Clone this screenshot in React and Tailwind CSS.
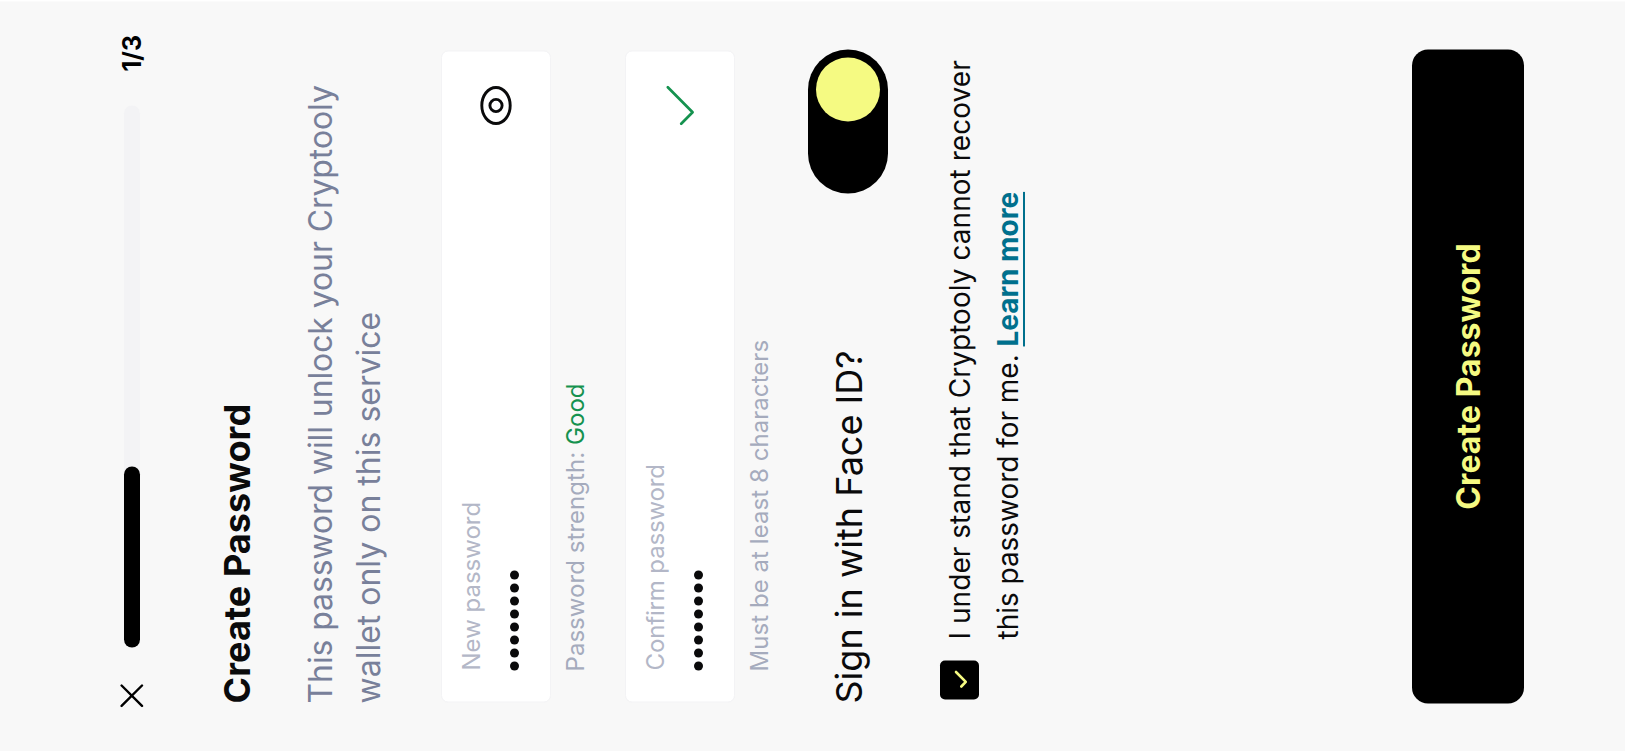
const Dots = () => (
  <div className="mt-[23px] flex h-2.5 items-center gap-1">
    {Array.from({ length: 8 }, (_, i) => (
      <span key={i} className="size-[9px] rounded-full bg-[#0a0a0b]" />
    ))}
  </div>
);

const Field = ({ label, icon }) => (
  <div className="mx-[49px] flex h-[110px] justify-between rounded-[7px] border border-[#f3f3f5] bg-white pr-[34px] pl-[31px]">
    <div className="pt-4">
      <div className="text-2xl leading-7 text-[#b3b7c7]">{label}</div>
      <Dots />
    </div>
    <div className="flex items-center">{icon}</div>
  </div>
);

const EyeIcon = () => (
  <svg width="40" height="32" viewBox="0 0 40 32" fill="none" stroke="#0a0a0b" strokeWidth="2.9">
    <ellipse cx="20" cy="16" rx="18" ry="14.2" />
    <circle cx="20" cy="16" r="6.1" />
  </svg>
);

const CheckIcon = () => (
  <svg width="40" height="32" viewBox="0 0 40 32" fill="none" stroke="#15924f" strokeWidth="2.7" strokeLinecap="round" strokeLinejoin="round">
    <path d="M1.8 17.2 L13.2 28.6 L38.2 3.8" />
  </svg>
);

export default function App() {
  return (
    <div className="h-[751px] w-[1625px] overflow-hidden bg-white">
      <div className="flex h-[1625px] w-[750px] origin-top-left translate-y-[751.5px] -rotate-90 flex-col bg-[#f8f8f8] pt-[108px] font-['Inter',sans-serif] text-[#0a0a0b]">
        <header className="flex h-12 items-center pl-11">
          <svg width="24" height="24" viewBox="0 0 24 24" fill="none" stroke="#000" strokeWidth="2.4" strokeLinecap="round">
            <path d="M1.6 1.6 L22 22 M22 1.6 L1.6 22" />
          </svg>
          <div className="ml-9 h-4 w-[542px] rounded-full bg-[#f3f3f5]">
            <div className="h-4 w-[181px] rounded-full bg-black" />
          </div>
          <span className="ml-[34px] pt-px text-[25px] font-bold text-black">1/3</span>
        </header>

        <h1 className="mt-[59px] pl-12 text-4xl leading-[44px] font-bold tracking-[0.07px]">Create Password</h1>
        <p className="mt-[38px] pl-12 text-[32px] leading-[48px] text-[#78809a]">
          <span className="tracking-[-0.1px]">This password will unlock your Cryptooly</span>
          <br />
          wallet only on this service
        </p>

        <div className="mt-12">
          <Field label="New password" icon={<EyeIcon />} />
          <p className="mt-[11px] pl-20 text-2xl leading-7 tracking-[0.05px] text-[#a5abbd]">
            Password strength: <span className="text-[#15924f]">Good</span>
          </p>
        </div>
        <div className="mt-[35px]">
          <Field label={<span className="tracking-[-0.14px]">Confirm password</span>} icon={<CheckIcon />} />
          <p className="mt-[11px] pl-20 text-2xl leading-7 tracking-[0.06px] text-[#a5abbd]">Must be at least 8 characters</p>
        </div>

        <div className="mx-12 mt-[34px] flex h-20 items-center justify-between">
          <span className="pt-px text-4xl">Sign in with Face ID?</span>
          <div className="flex h-20 w-36 justify-end rounded-full bg-black p-2">
            <div className="size-16 rounded-full bg-[#f5fa82]" />
          </div>
        </div>

        <div className="mt-12 flex pl-[52px]">
          <div className="mt-1 flex size-[39px] items-center justify-center rounded-[5px] bg-black">
            <svg width="20" height="16" viewBox="0 0 20 16" fill="none" stroke="#f5fa82" strokeWidth="2.6" strokeLinecap="round" strokeLinejoin="round">
              <path d="M3 9.3 L7.6 13.8 L17.5 4" />
            </svg>
          </div>
          <p className="ml-[21px] text-[28px] leading-[48px] tracking-[-0.03px] whitespace-nowrap">
            <span className="tracking-[0.05px]">I under stand that Cryptooly cannot recover</span>
            <br />
            this password for me.{" "}
            <a className="font-bold text-[#00708d] underline decoration-2 underline-offset-[5px]">Learn more</a>
          </p>
        </div>

        <button className="mx-12 mt-[380px] h-28 rounded-2xl bg-black pt-px text-[32px] font-bold tracking-[0.05px] text-[#f5fa82]">
          Create Password
        </button>
      </div>
    </div>
  );
}
